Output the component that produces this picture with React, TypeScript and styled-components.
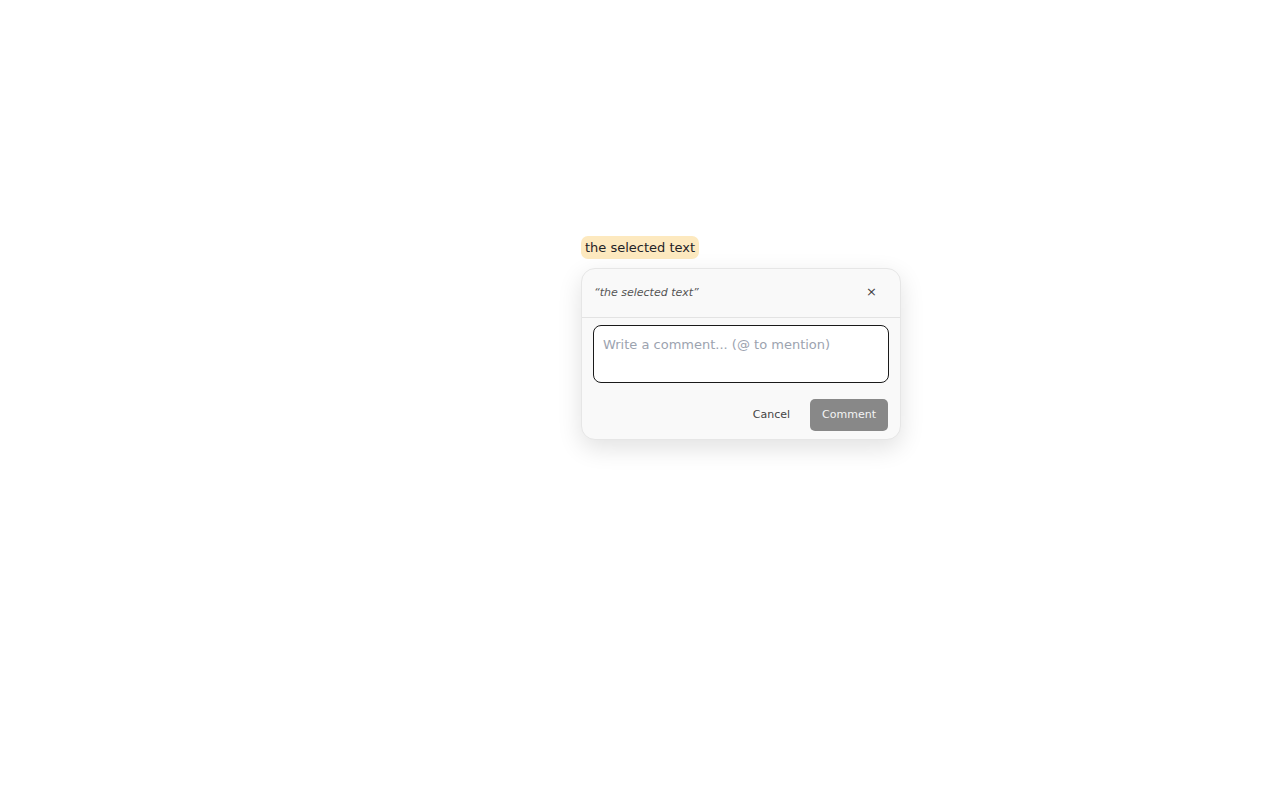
import React, { useState } from "react";
import styled, { createGlobalStyle } from "styled-components";

const GlobalStyle = createGlobalStyle`
  html, body {
    margin: 0;
    padding: 0;
    background: #ffffff;
    font-family: "DejaVu Sans", "Noto Sans", sans-serif;
  }
`;

const Page = styled.div`
  width: 1280px;
  height: 800px;
  box-sizing: border-box;
  padding: 236px 0 0 581px;
`;

const Anchor = styled.div`
  position: relative;
  display: inline-block;
`;

const Highlight = styled.span`
  display: inline-block;
  background: #fde9bf;
  color: #1f2328;
  font-size: 13px;
  line-height: 23px;
  padding: 0 4px;
  border-radius: 7px;
`;

const Popover = styled.div`
  position: absolute;
  top: 32px;
  left: 0;
  width: 320px;
  box-sizing: border-box;
  background: #f9f9f9;
  border: 1px solid #e6e6e6;
  border-radius: 14px;
  box-shadow: 0 8px 24px rgba(0, 0, 0, 0.12);
`;

const Header = styled.div`
  display: flex;
  align-items: center;
  justify-content: space-between;
  height: 49px;
  padding: 0 23px 2px 12px;
  box-sizing: border-box;
  border-bottom: 1px solid #e3e3e3;
`;

const Quote = styled.span`
  font-size: 11px;
  font-style: italic;
  color: #555;
`;

const Close = styled.button`
  border: none;
  background: none;
  padding: 0 0 2px;
  font-family: inherit;
  font-size: 13px;
  color: #444;
  cursor: pointer;
  line-height: 1;
`;

const Body = styled.div`
  display: flex;
  flex-direction: column;
  gap: 16px;
  padding: 7px 11px 8px 11px;
`;

const Input = styled.textarea`
  width: 100%;
  height: 58px;
  box-sizing: border-box;
  resize: none;
  border: 1.5px solid #1a1a1a;
  border-radius: 8px;
  background: #fff;
  padding: 11px 9px 9px;
  font-family: inherit;
  font-size: 13px;
  color: #222;
  outline: none;
  &::placeholder {
    color: #9ca3af;
  }
`;

const Actions = styled.div`
  display: flex;
  justify-content: flex-end;
  align-items: center;
  gap: 8px;
  padding-right: 1px;
`;

const Button = styled.button<{ $primary?: boolean }>`
  height: 32px;
  padding: 0 12px 2px;
  border: none;
  border-radius: 5px;
  font-family: inherit;
  font-size: 11px;
  cursor: pointer;
  background: ${(p) => (p.$primary ? "#888888" : "transparent")};
  color: ${(p) => (p.$primary ? "#f4f4f4" : "#444")};
`;

export default function App() {
  const [text, setText] = useState("");
  return (
    <>
      <GlobalStyle />
      <Page>
        <Anchor>
          <Highlight>the selected text</Highlight>
          <Popover>
            <Header>
              <Quote>“the selected text”</Quote>
              <Close aria-label="Close">×</Close>
            </Header>
            <Body>
              <Input
                placeholder="Write a comment... (@ to mention)"
                value={text}
                onChange={(e) => setText(e.target.value)}
              />
              <Actions>
                <Button>Cancel</Button>
                <Button $primary disabled={!text}>
                  Comment
                </Button>
              </Actions>
            </Body>
          </Popover>
        </Anchor>
      </Page>
    </>
  );
}
